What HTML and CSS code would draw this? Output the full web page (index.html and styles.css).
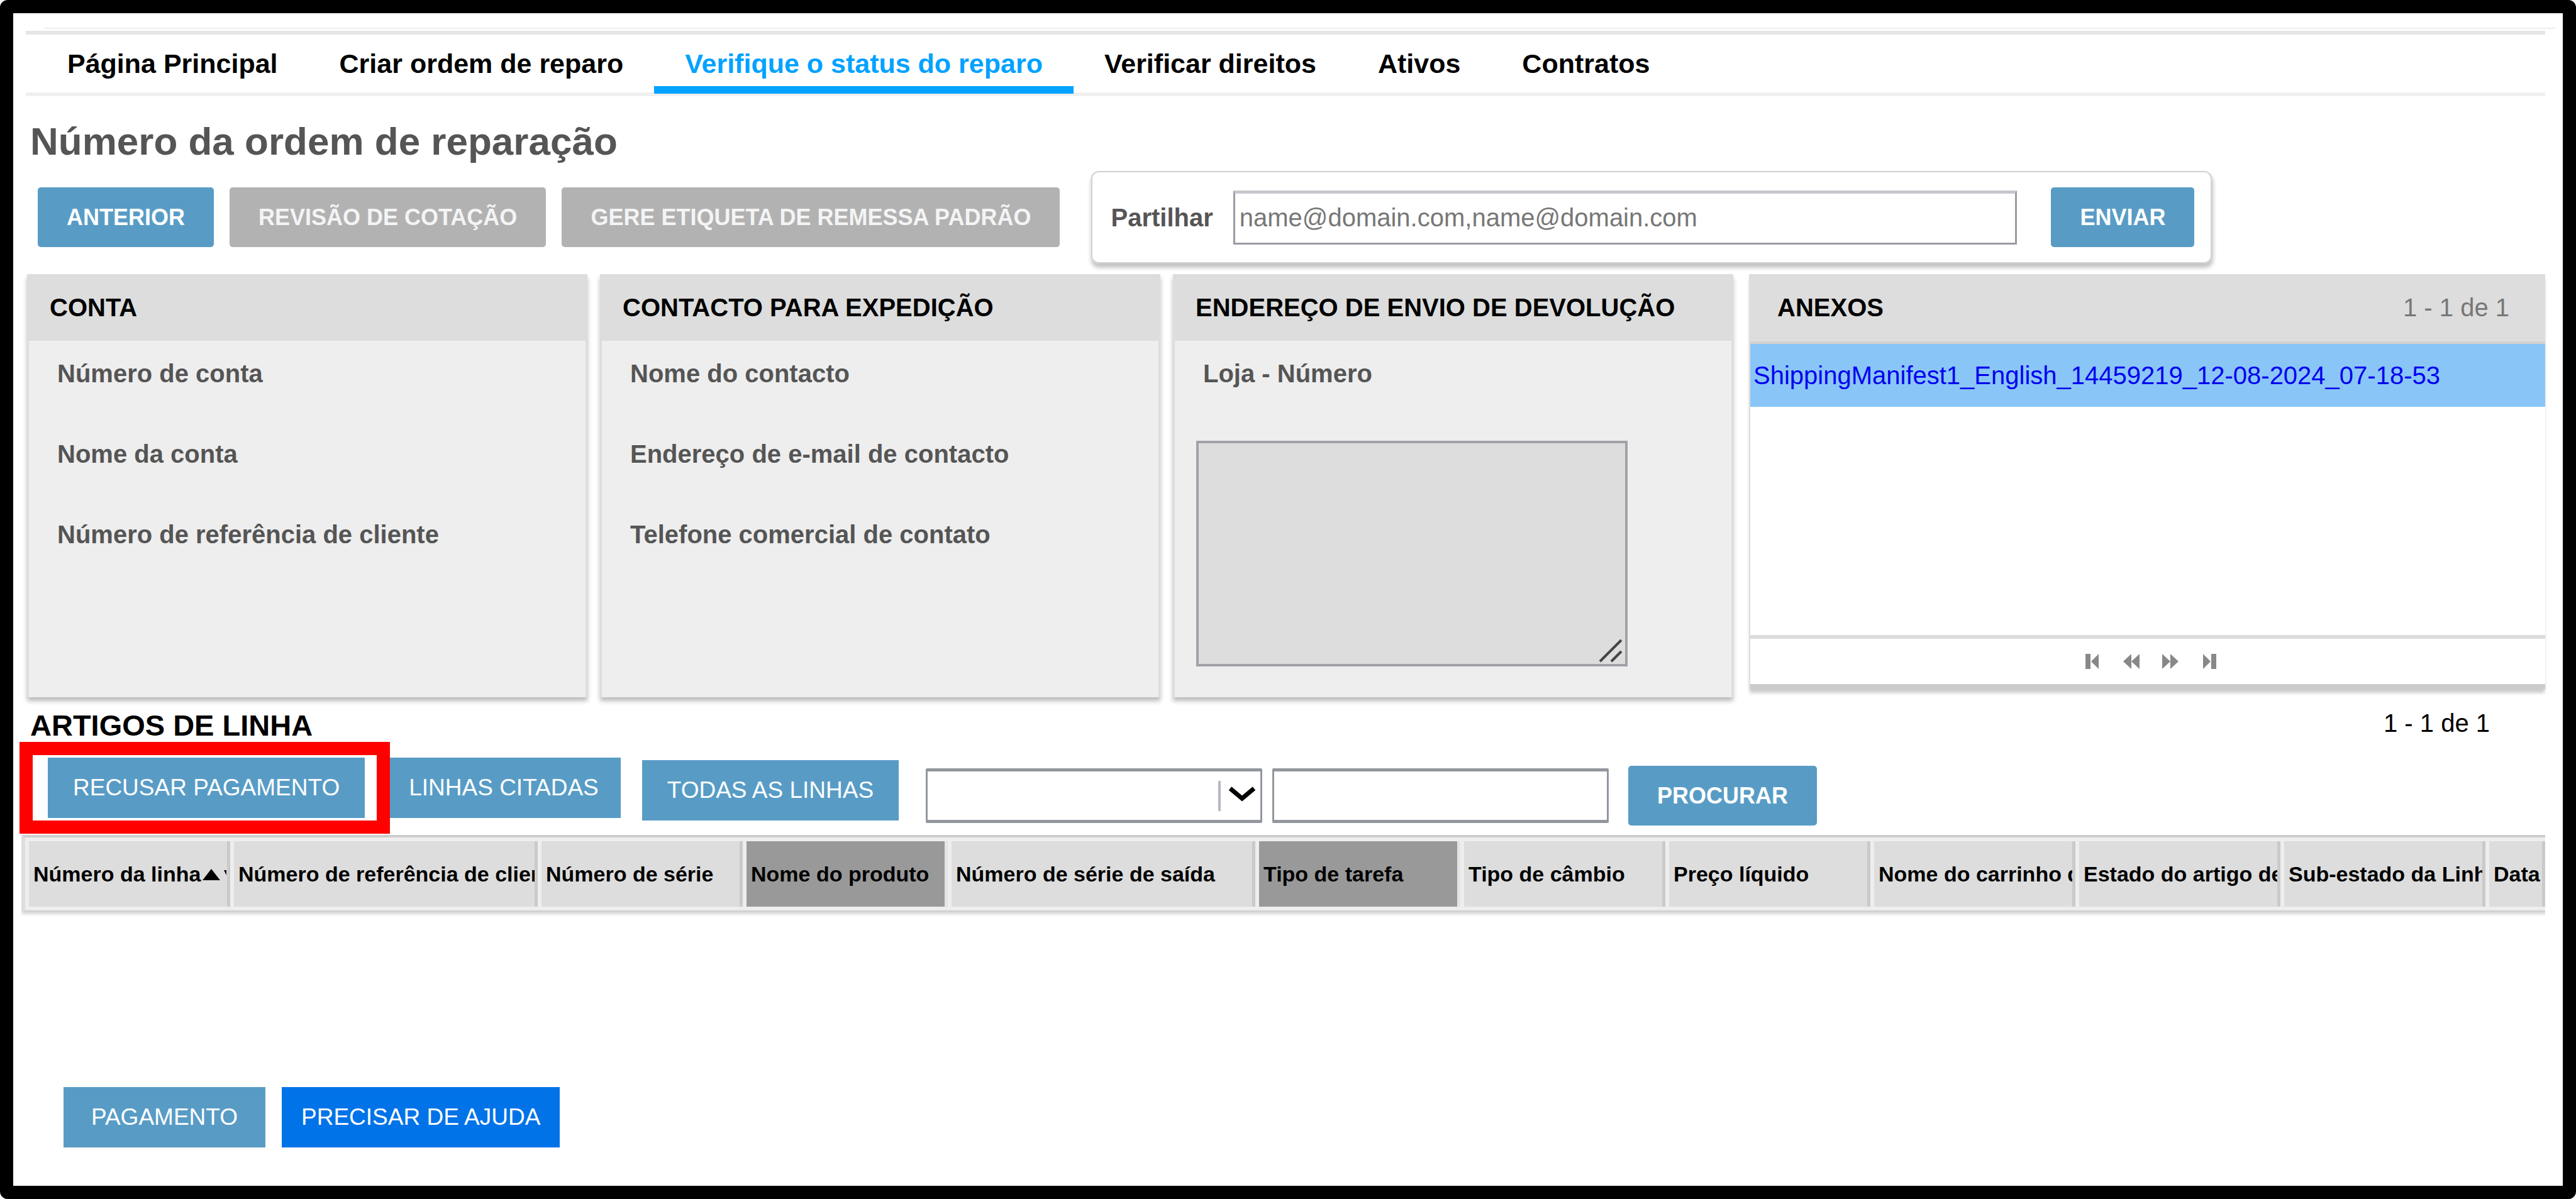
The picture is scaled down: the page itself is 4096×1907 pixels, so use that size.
FILE: index.html
```html
<!DOCTYPE html>
<html lang="pt">
<head>
<meta charset="utf-8">
<title>Número da ordem de reparação</title>
<link rel="stylesheet" href="styles.css">
</head>
<body>
<div class="app">
  <div class="hairline"></div>
  <nav class="tabs">
    <a class="tab" href="#">Página Principal</a>
    <a class="tab" href="#">Criar ordem de reparo</a>
    <a class="tab tab-active" href="#" aria-current="page">Verifique o status do reparo</a>
    <a class="tab" href="#">Verificar direitos</a>
    <a class="tab" href="#">Ativos</a>
    <a class="tab" href="#">Contratos</a>
  </nav>

  <h1 class="title">Número da ordem de reparação</h1>

  <div class="actions">
    <button class="btn" type="button">ANTERIOR</button>
    <button class="btn btn-muted" type="button">REVISÃO DE COTAÇÃO</button>
    <button class="btn btn-muted" type="button">GERE ETIQUETA DE REMESSA PADRÃO</button>
    <form class="share">
      <label class="share-label" for="share-to">Partilhar</label>
      <input class="share-input" id="share-to" type="text" placeholder="name@domain.com,name@domain.com">
      <button class="btn" type="button">ENVIAR</button>
    </form>
  </div>

  <div class="panels">
    <div class="cards">
      <section class="card">
        <h2 class="card-title">CONTA</h2>
        <div class="card-body">
          <p class="field">Número de conta</p>
          <p class="field">Nome da conta</p>
          <p class="field">Número de referência de cliente</p>
        </div>
      </section>
      <section class="card">
        <h2 class="card-title">CONTACTO PARA EXPEDIÇÃO</h2>
        <div class="card-body">
          <p class="field">Nome do contacto</p>
          <p class="field">Endereço de e-mail de contacto</p>
          <p class="field">Telefone comercial de contato</p>
        </div>
      </section>
      <section class="card">
        <h2 class="card-title">ENDEREÇO DE ENVIO DE DEVOLUÇÃO</h2>
        <div class="card-body">
          <label class="field" for="return-address">Loja - Número</label>
          <div class="address">
            <textarea class="address-box" id="return-address" readonly></textarea>
            <svg class="grip" viewBox="0 0 38 38" aria-hidden="true"><path d="M2 36 36 2M20 36 36 20" fill="none" stroke="#444" stroke-width="4"/></svg>
          </div>
        </div>
      </section>
    </div>
    <section class="attachments">
      <header class="attachments-head">
        <h2 class="attachments-title">ANEXOS</h2>
        <span class="attachments-count">1 - 1 de 1</span>
      </header>
      <div class="attachments-list">
        <a class="attachment" href="#">ShippingManifest1_English_14459219_12-08-2024_07-18-53</a>
      </div>
      <footer class="pager">
        <button class="pager-btn" type="button" aria-label="Primeira"><svg viewBox="0 0 26 24"><path d="M2 0h8v24H2zM23 0v24L11 12z"/></svg></button>
        <button class="pager-btn" type="button" aria-label="Anterior"><svg viewBox="0 0 26 24"><path d="M13 0v24L0 12zM26 0v24L13 12z"/></svg></button>
        <button class="pager-btn" type="button" aria-label="Seguinte"><svg viewBox="0 0 26 24"><path d="M0 0v24l13-12zM13 0v24l13-12z"/></svg></button>
        <button class="pager-btn" type="button" aria-label="Última"><svg viewBox="0 0 26 24"><path d="M16 0h8v24h-8zM3 0v24l12-12z"/></svg></button>
      </footer>
    </section>
  </div>

  <div class="section-head">
    <h2 class="section-title">ARTIGOS DE LINHA</h2>
    <span class="section-count">1 - 1 de 1</span>
  </div>

  <div class="toolbar">
    <div class="highlight"><button class="flat flat-refuse" type="button">RECUSAR PAGAMENTO</button></div>
    <button class="flat flat-joined" type="button">LINHAS CITADAS</button>
    <button class="flat flat-all" type="button">TODAS AS LINHAS</button>
    <form class="filter">
      <div class="select-wrap">
        <select class="filter-field" aria-label="Campo"><option></option></select>
        <svg class="select-arrow" viewBox="0 0 60 48" aria-hidden="true"><path d="M2 0V48" stroke="#b5b8bd" stroke-width="4"/><path d="M19 12 38 28 57 12" fill="none" stroke="#000" stroke-width="7"/></svg>
      </div>
      <input class="filter-field" type="text" aria-label="Valor">
      <button class="btn btn-search" type="button">PROCURAR</button>
    </form>
  </div>

  <div class="grid-wrap">
    <table class="grid">
      <colgroup>
        <col class="w-m"><col class="w-l"><col class="w-m"><col class="w-m"><col class="w-l"><col class="w-m">
        <col class="w-m"><col class="w-m"><col class="w-m"><col class="w-m"><col class="w-m"><col class="w-s">
      </colgroup>
      <thead>
        <tr>
          <th>Número da linha<svg class="sort" viewBox="0 0 38 22" aria-hidden="true"><path d="M0 20 14 2 28 20zM34 4l4 0v8z"/></svg></th>
          <th>Número de referência de clien</th>
          <th>Número de série</th>
          <th class="dark">Nome do produto</th>
          <th>Número de série de saída</th>
          <th class="dark">Tipo de tarefa</th>
          <th>Tipo de câmbio</th>
          <th>Preço líquido</th>
          <th>Nome do carrinho d</th>
          <th>Estado do artigo de</th>
          <th>Sub-estado da Linh</th>
          <th>Data</th>
        </tr>
      </thead>
    </table>
  </div>

  <div class="bottom">
    <button class="flat" type="button">PAGAMENTO</button>
    <button class="flat flat-help" type="button">PRECISAR DE AJUDA</button>
  </div>
</div>
</body>
</html>
```
FILE: styles.css
```css
* { box-sizing: border-box; }

body {
  margin: 0;
  background: #fff;
  color: #000;
  font: 40px/48px "Liberation Sans", Arial, sans-serif;
}

h1, h2, p { margin: 0; }
button, input, select, textarea { font: inherit; margin: 0; }

.app {
  display: flex;
  flex-direction: column;
  min-height: 100vh;
  padding: 23px 28px 61px 20px;
  border: 21px solid #000;
  border-radius: 12px;
}

.hairline {
  height: 2px;
  margin: 0 -16px 3px 30px;
  background: #ededed;
}

/* Navigation */
.tabs {
  display: flex;
  padding-left: 17px;
  border-top: 6px solid #e6e6e6;
  border-bottom: 6px solid #f0f0f0;
}
.tab {
  position: relative;
  padding: 0 49px;
  color: #000;
  font-size: 43px;
  font-weight: bold;
  line-height: 92px;
  text-decoration: none;
  white-space: nowrap;
}
.tab-active { color: #00a2ff; }
.tab-active::after {
  content: "";
  position: absolute;
  left: 0;
  right: 0;
  bottom: -2px;
  height: 12px;
  background: #00a2ff;
}

.title {
  margin: 32px 0 7px 7px;
  color: #555;
  font-size: 62px;
  line-height: 80px;
}

/* Buttons */
.btn {
  height: 95px;
  padding: 0 46px;
  border: 0;
  border-radius: 5px;
  background: #589cc6;
  color: #fff;
  font-size: 36px;
  font-weight: bold;
  white-space: nowrap;
}
.btn-muted { background: #b2b2b2; color: #f4f4f4; }

.flat {
  height: 96px;
  padding: 0 44px;
  border: 0;
  background: #589cc6;
  color: #fff;
  font-size: 37px;
  white-space: nowrap;
}

/* Order actions */
.actions {
  display: flex;
  align-items: center;
  gap: 25px;
  padding-left: 19px;
}
.share {
  display: flex;
  align-items: center;
  width: 1782px;
  height: 147px;
  margin-left: 25px;
  padding: 0 26px 0 29px;
  border: 2px solid #d2d2d2;
  border-radius: 12px;
  box-shadow: 1px 6px 6px 1px #c4c4c4;
}
.share-label { margin-right: 32px; color: #555; font-weight: bold; }
.share-input {
  flex: 1;
  min-width: 0;
  height: 86px;
  margin-right: 54px;
  padding: 0 7px;
  border: 3px solid #9a9ca4;
  border-top: 5px solid #c6c8cd;
  background: #fff;
}
.share-input::placeholder { color: #777; opacity: 1; }

/* Panels */
.panels {
  display: grid;
  grid-template-columns: 2713fr 1266fr;
  align-items: start;
  gap: 25px;
  margin: 17px 0 18px 2px;
}
.cards {
  display: grid;
  grid-template-columns: repeat(3, 1fr);
  gap: 20px;
}
.card {
  display: flex;
  flex-direction: column;
  background: #eee;
  box-shadow: 0 6px 7px #bbb;
}
.card-title {
  padding: 0 0 0 36px;
  background: #ddd;
  font-size: 40px;
  line-height: 106px;
  white-space: nowrap;
}
.card-body {
  flex: 1;
  padding: 28px 34px 49px 34px;
  border: solid #ddd;
  border-width: 0 3px;
}
.field {
  display: block;
  margin-bottom: 80px;
  padding-left: 11px;
  color: #555;
  font-weight: bold;
}
.address { position: relative; width: 84%; padding-top: 3px; }
.address-box {
  display: block;
  width: 100%;
  height: 359px;
  border: 4px solid #a0a2a8;
  background: #ddd;
  resize: none;
}
.grip {
  position: absolute;
  right: 8px;
  bottom: 6px;
  width: 38px;
  height: 38px;
}

.attachments {
  border-left: 2px solid #ddd;
  box-shadow: 0 7px 5px -1px #ccc;
}
.attachments-head {
  display: flex;
  justify-content: space-between;
  padding: 0 57px 0 43px;
  border-bottom: 4px solid #d2d2d2;
  background: #ddd;
  line-height: 107px;
}
.attachments-title { font-size: 40px; }
.attachments-count { color: #777; }
.attachments-list { min-height: 463px; }
.attachment {
  display: block;
  padding-left: 5px;
  background: #8ac5f7;
  color: #0000f0;
  line-height: 100px;
  text-decoration: none;
}
.pager {
  display: flex;
  align-items: center;
  justify-content: center;
  gap: 36px;
  height: 86px;
  padding-left: 10px;
  border-top: 6px solid #dcdcdc;
  border-bottom: 8px solid #cbcbcb;
}
.pager-btn {
  display: flex;
  width: 26px;
  padding: 0;
  border: 0;
  background: none;
}
.pager-btn svg { width: 26px; height: 24px; fill: #888; }

/* Line items */
.section-head {
  display: flex;
  justify-content: space-between;
  padding: 0 88px 0 7px;
}
.section-title { font-size: 47px; line-height: 53px; }
.section-count { line-height: 46px; }

.toolbar {
  display: flex;
  align-items: center;
  margin-left: -10px;
}
.highlight {
  height: 146px;
  padding: 4px 19px 4px 24px;
  border: 21px solid #f00;
}
.flat-refuse { padding: 0 40px; }
.flat-joined { padding: 0 35px 0 30px; }
.flat-all { margin: 8px 43px 0 34px; padding: 0 40px; }
.filter {
  display: flex;
  align-items: center;
  gap: 16px;
  padding-top: 25px;
}
.select-wrap { position: relative; }
.filter-field {
  display: block;
  width: 535px;
  height: 87px;
  padding: 0 10px;
  border: solid #92979e;
  border-width: 5px 3px;
  border-radius: 2px;
  background: #fff;
  appearance: none;
}
.select-arrow {
  position: absolute;
  top: 20px;
  right: 10px;
  width: 60px;
  height: 48px;
  pointer-events: none;
}
.btn-search { margin-left: 15px; }

.grid-wrap {
  margin: 2px 0 0 -7px;
  overflow: hidden;
  padding-bottom: 14px;
}
.grid {
  width: calc(100% + 6px);
  table-layout: fixed;
  border-spacing: 6px;
  border-top: 4px solid #cdcdcd;
  border-left: 6px solid #ddd;
  background: #eee;
  box-shadow: 0 5px 6px #ccc;
}
.w-s { width: 89px; }
.w-m { width: 320px; }
.w-l { width: 483px; }
.grid th {
  height: 104px;
  padding: 0 0 0 7px;
  overflow: hidden;
  border-right: 5px solid #cacaca;
  background: #ddd;
  font-size: 34px;
  text-align: left;
  white-space: nowrap;
}
.grid .dark { border-color: #e4e4e4; background: #999; }
.sort { width: 38px; height: 22px; margin-left: 3px; }

.bottom {
  display: flex;
  gap: 26px;
  margin-top: auto;
  padding-left: 60px;
}
.flat-help { padding: 0 31px; background: #0073e8; }
```
